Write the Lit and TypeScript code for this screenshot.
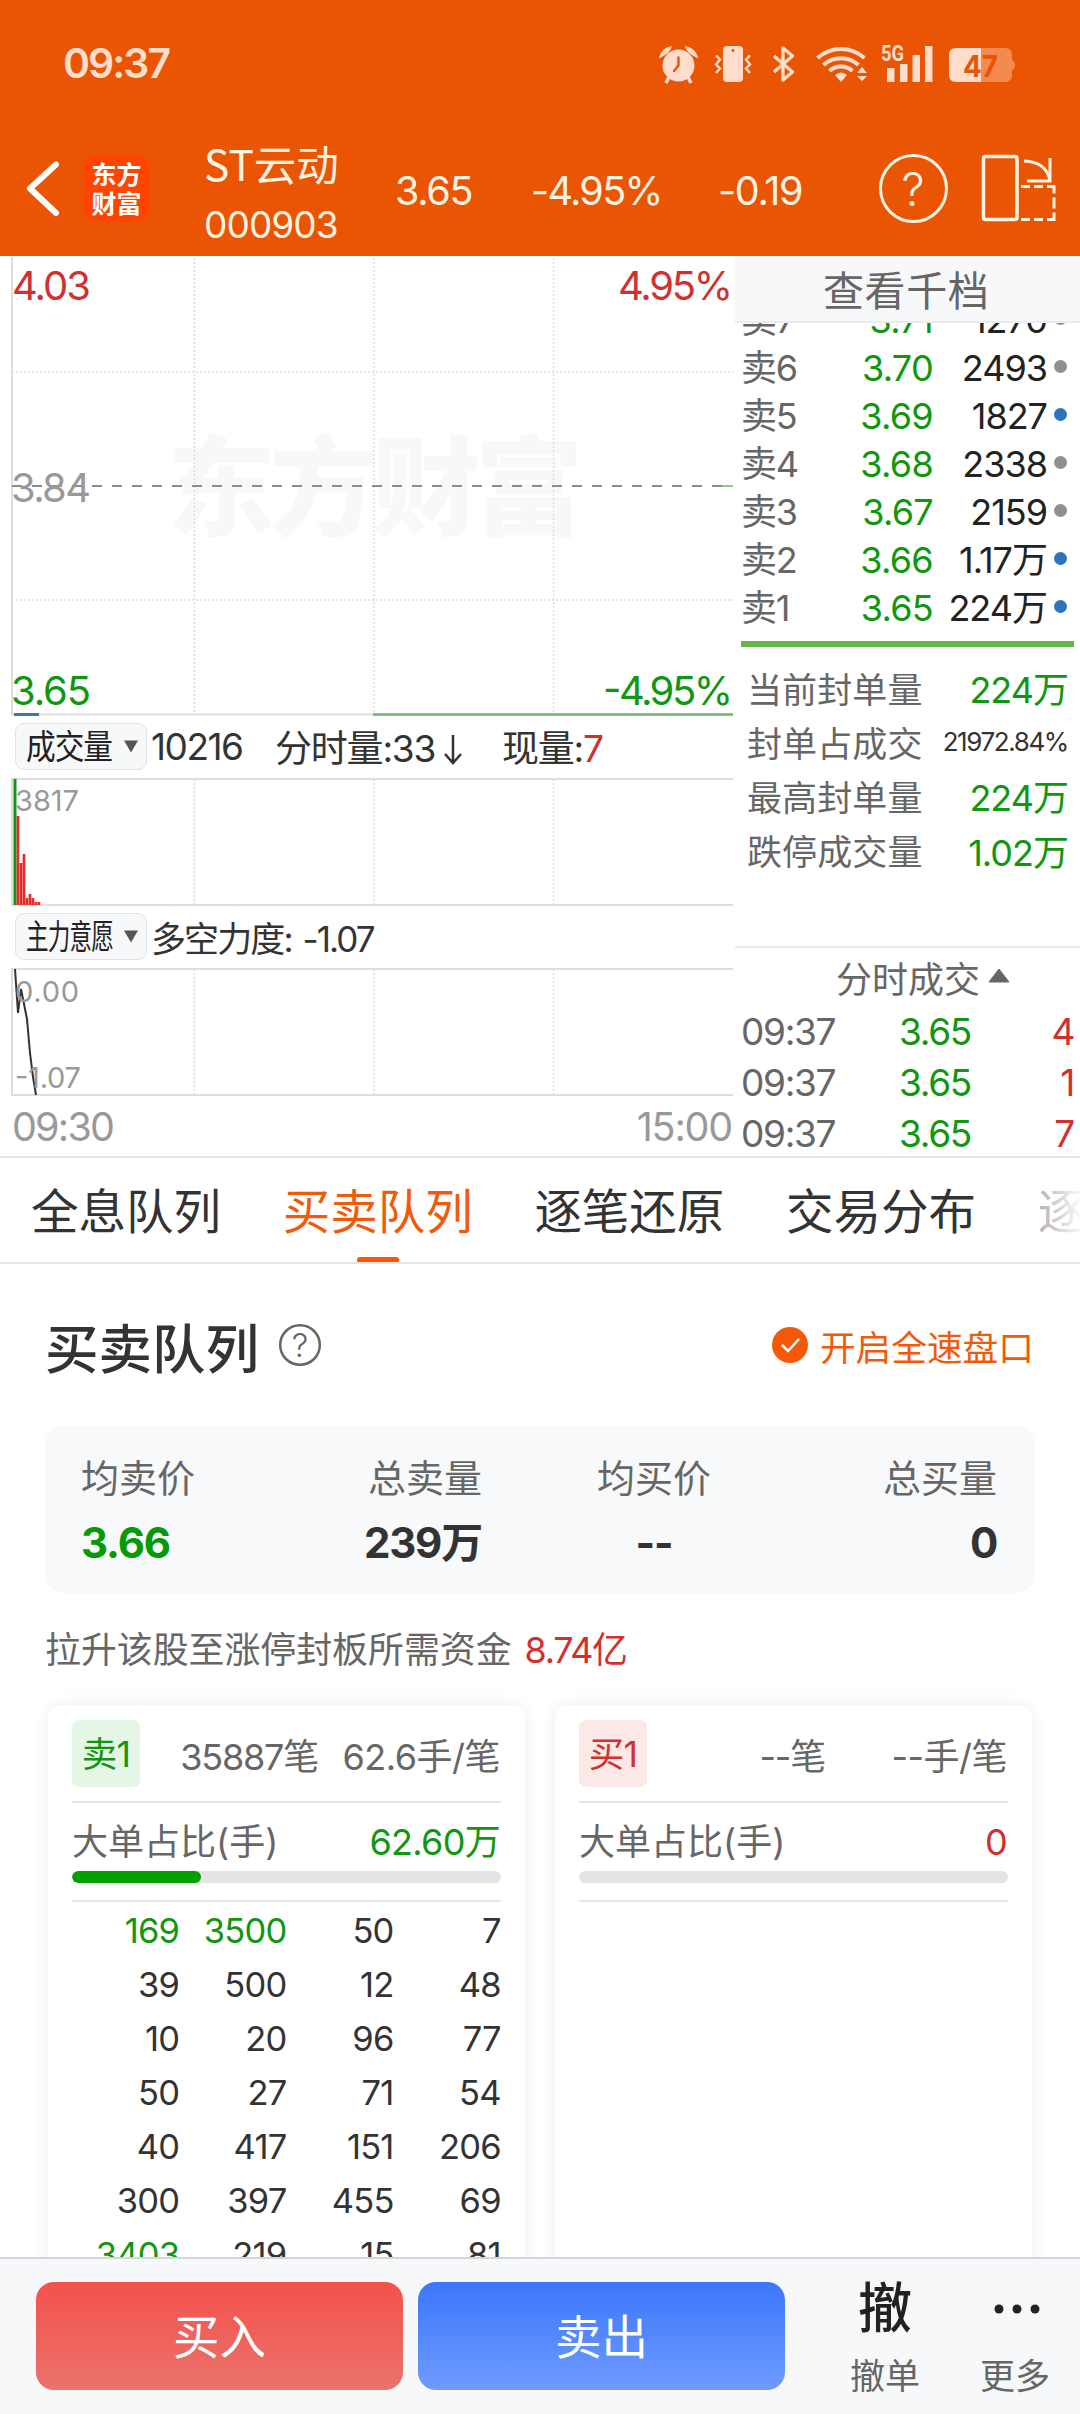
import { LitElement, html, svg, css } from "lit";
import { customElement, property } from "lit/decorators.js";
import { classMap } from "lit/directives/class-map.js";

const shared = css`
  * { box-sizing: border-box; }
  :host { display: block; }
  svg { display: block; }
  .green { color: #119611; }
  .red { color: #d0312f; }
`;

@customElement("status-bar")
class StatusBar extends LitElement {
  static styles = [shared, css`
    .bar { height: 124px; display: flex; justify-content: space-between; padding: 42px 64px 0 63px; color: #ffdccb; }
    .time { font-size: 41px; line-height: 43px; font-weight: 600; letter-spacing: -2px; }
    .num { font: 700 30px Inter, sans-serif; fill: #ea5504; }
    .net { font: 700 22px Roboto, sans-serif; fill: #ffdccb; }
  `];
  render() {
    return html`<div class="bar">
      <div class="time">09:37</div>
      <svg width="360" height="44" viewBox="656 42 360 44" fill="#ffdccb">
        <g>
          <circle cx="678.5" cy="65.500" r="16" />
          <path d="M660 57a13 13 0 0 1 11-10q-2 6-11 10zM697 57a13 13 0 0 0-11-10q2 6 11 10z" stroke="#ffdccb" stroke-width="1.500" />
          <path d="M669 77l-3 6M688 77l3 6" stroke="#ffdccb" stroke-width="3.500" />
          <path d="M678.500 57.500v8l-4.500 5.500" fill="none" stroke="#ea5504" stroke-width="2.400" stroke-linecap="round" />
        </g>
        <rect x="723" y="46" width="20" height="36" rx="4" />
        <circle cx="733" cy="50.500" r="1.500" fill="#ea5504" />
        <path d="M716 55.500l4 4-4 5 4 4-4 4.500M750 55.500l-4 4 4 5-4 4 4 4.500" fill="none" stroke="#ffdccb" stroke-width="2.400" />
        <path d="M774 56l18.500 16-9.500 8V48l9.500 8L774 72" fill="none" stroke="#ffdccb" stroke-width="3.300" stroke-linejoin="round" />
        <g fill="none" stroke="#ffdccb" stroke-width="4">
          <path d="M817.500 58a35 35 0 0 1 47 0" />
          <path d="M823.500 65a26 26 0 0 1 35 0" />
          <path d="M829.500 71a17 17 0 0 1 23 0" />
        </g>
        <path d="M835 75q6-5 12 0l-6 7zM862 67l5 6h-10zM862 81l-5-5h10z" />
        <text class="net" x="881" y="61" textLength="23" lengthAdjust="spacingAndGlyphs">5G</text>
        <path d="M887 68h7.500v14H887zM900 64h7.500v18H900zM912.500 55h7.500v27h-7.500zM925 46h7.500v36H925z" />
        <path d="M981 48h24q7 0 7 7v5q3 1 3 5t-3 5v5q0 7-7 7h-24z" fill="#f58a51" />
        <path d="M956 48h25v34h-25q-7 0-7-7V55q0-7 7-7z" />
        <text class="num" x="963" y="77" textLength="35" lengthAdjust="spacingAndGlyphs">47</text>
      </svg>
    </div>`;
  }
}

@customElement("stock-header")
class StockHeader extends LitElement {
  static styles = [shared, css`
    .bar { height: 132px; display: flex; color: #fff3e2; padding: 20px 0 0 24px; }
    .back { margin-top: 14px; width: 36px; }
    .logo { margin: 11px 0 0 23px; width: 67px; height: 67px; border-radius: 13px; background: #ff4500; color: #fff;
      font-family: "Noto Sans CJK SC", sans-serif; font-weight: 700; font-size: 25px; line-height: 29px;
      text-align: center; padding-top: 4px; }
    .name { margin-left: 54px; width: 191px; font-size: 42.500px; line-height: 44px; font-family: "Noto Sans CJK SC", sans-serif; white-space: nowrap; margin-top: -3px; }
    .code { font-family: Inter, sans-serif; font-size: 37px; letter-spacing: -0.900px; line-height: 38px; margin-top: 21px; }
    .n { font-size: 39.500px; letter-spacing: -1.300px; line-height: 44px; margin-top: 25px; white-space: nowrap; }
    .price { width: 136px; }
    .pct { width: 187px; letter-spacing: -1.700px; }
    .chg { width: 157px; }
    .q { font: 300 46px Inter, sans-serif; fill: #fff3e2; text-anchor: middle; }
  `];
  render() {
    return html`<div class="bar">
      <svg class="back" width="36" height="62" viewBox="24 158 36 62" fill="none" stroke="#fff" stroke-width="6" stroke-linecap="round" stroke-linejoin="round"><path d="M56 164.500L30 188.500L56 213" /></svg>
      <div class="logo">东方<br />财富</div>
      <div class="name">ST云动<div class="code">000903</div></div>
      <div class="n price">3.65</div>
      <div class="n pct">-4.95%</div>
      <div class="n chg">-0.19</div>
      <svg width="190" height="80" viewBox="875 144 190 80" fill="none" stroke="#fff3e2" stroke-width="3">
        <circle cx="913.500" cy="188.500" r="33" />
        <text class="q" x="913" y="205.500" stroke="none">?</text>
        <rect x="983.500" y="156.500" width="33.500" height="63" rx="2" stroke-width="3.500" />
        <path d="M1024 161q23 1 26 20M1050 158v23h-23" />
        <path d="M1021 186.500h9m4 0h9m4 0h7v7m0 4v11m0 4v7h-7m-4 0h-9m-4 0h-9" />
      </svg>
    </div>`;
  }
}

const VERTICALS = [194.5, 374, 553.5];
const BARS = [816, 863, 854, 898, 894, 898, 902, 902];

@customElement("minute-chart")
class MinuteChart extends LitElement {
  static styles = [shared, css`
    :host { width: 735px; }
    .big { font: 40px Inter, sans-serif; }
    .small { font: 29px Inter, sans-serif; fill: #999; }
    .r { fill: #d0312f; } .g { fill: #119611; } .grey { fill: #999; }
    .mark { font: 900 108px "Noto Sans CJK SC", sans-serif; fill: #f8f8f8; }
    .grid { stroke: #ddd; stroke-width: 1.500; stroke-dasharray: 2 2; fill: none; }
    .axis { stroke: #dedede; stroke-width: 2; fill: none; }
    .info { display: flex; align-items: center; height: 62px; padding: 0 0 2px 15px; font-size: 37px; letter-spacing: -1.200px; color: #333; white-space: nowrap; }
    .select { width: 132px; height: 47px; border: 1px solid #e0e3e8; border-radius: 9px; background: #f6f8fa; }
    .opt { font: 34px "Noto Sans CJK SC", sans-serif; fill: #222; }
    .total { width: 128px; padding-left: 4px; letter-spacing: -1.500px; }
    .per { width: 227px; }
    .force { padding-left: 4px; letter-spacing: -1.900px; word-spacing: 3px; font-size: 35px; }
    .arrow { display: inline-block; vertical-align: -3px; margin-left: 8px; }
    .times { display: flex; justify-content: space-between; height: 61px; padding: 7px 3px 0 12px; font-size: 39.500px; letter-spacing: -1.200px; line-height: 48px; color: #999; }
    .start { letter-spacing: -1.800px; }
  `];
  private select(label: string, width: number) {
    return html`<div class="select"><svg width="130" height="45"><text class="opt" x="10" y="35" textLength=${width} lengthAdjust="spacingAndGlyphs">${label}</text><path d="M108 16.500h14l-7 12z" fill="#555" /></svg></div>`;
  }
  private verticals(y1: number, y2: number) {
    return VERTICALS.map((x) => svg`<path class="grid" d="M${x} ${y1}V${y2}" />`);
  }
  render() {
    return html`
      <svg width="735" height="460" viewBox="0 256 735 460">
        <text class="mark" x="167" y="527" textLength="416">东方财富</text>
        ${this.verticals(258, 714)}
        <path class="grid" d="M12 372H733M12 600H733" />
        <path class="axis" d="M12 257V714.500H733" />
        <path d="M12 486H733" stroke="#8c8c8c" stroke-width="2" stroke-dasharray="10 10" />
        <path d="M722 486h11" stroke="#8cc98f" stroke-width="2" />
        <path d="M373 714.500H733" stroke="#75b27a" stroke-width="2.500" />
        <path d="M14 714.500h25" stroke="#4573ab" stroke-width="3" />
        <text class="big r" x="12" y="300" textLength="79">4.03</text>
        <text class="big r" x="618" y="300" textLength="115">4.95%</text>
        <text class="big grey" x="11" y="502" textLength="80">3.84</text>
        <text class="big g" x="11" y="705" textLength="80">3.65</text>
        <text class="big g" x="603" y="705" textLength="130">-4.95%</text>
      </svg>
      <div class="info">
        ${this.select("成交量", 86)}
        <div class="total">10216</div>
        <div class="per">分时量:33<svg class="arrow" width="20" height="31" fill="none" stroke="#333" stroke-width="2.500"><path d="M10 1v27M2 20l8 9l8-9" /></svg></div>
        <div>现量:<span class="red">7</span></div>
      </div>
      <svg width="735" height="128" viewBox="0 778 735 128">
        ${this.verticals(779, 904)}
        <path class="axis" d="M733 779H12V905H733" />
        <text class="small" x="15" y="811" textLength="64">3817</text>
        <path d="M15 779V905" stroke="#119611" stroke-width="3" />
        ${BARS.map((y, i) => svg`<rect x=${16.6 + i * 3} y=${y} width="2.700" height=${905 - y} fill="#e62a2a" />`)}
      </svg>
      <div class="info">
        ${this.select("主力意愿", 87)}
        <div class="force">多空力度: -1.07</div>
      </div>
      <svg width="735" height="128" viewBox="0 968 735 128">
        ${this.verticals(969, 1095)}
        <path class="axis" d="M733 969H12V1095H733" />
        <path d="M15 969L18 1013L21 989L27 1019L30 1053L33 1077L36 1095" fill="none" stroke="#333" stroke-width="2" />
        <text class="small" x="15" y="1002" textLength="64">0.00</text>
        <text class="small" x="15" y="1088" textLength="66">-1.07</text>
      </svg>
      <div class="times"><span class="start">09:30</span><span>15:00</span></div>`;
  }
}

const ASKS: [string, string, string, boolean][] = [
  ["卖7", "3.71", "1270", false],
  ["卖6", "3.70", "2493", false],
  ["卖5", "3.69", "1827", true],
  ["卖4", "3.68", "2338", false],
  ["卖3", "3.67", "2159", false],
  ["卖2", "3.66", "1.17万", true],
  ["卖1", "3.65", "224万", true],
];
const STATS: [string, string, string][] = [
  ["当前封单量", "224万", "green"],
  ["封单占成交", "21972.84%", "tiny"],
  ["最高封单量", "224万", "green"],
  ["跌停成交量", "1.02万", "green"],
];
const TICKS = ["4", "1", "7"];

@customElement("order-book")
class OrderBook extends LitElement {
  static styles = [shared, css`
    :host { width: 345px; color: #666; }
    .head { height: 67px; background: #f7f8fa; border-bottom: 2px solid #eaecef; font-size: 41px; line-height: 70px; letter-spacing: 0.600px; padding-left: 88px; }
    .asks { height: 318px; overflow: hidden; display: flex; flex-direction: column; justify-content: flex-end; padding-bottom: 9px; }
    .ask { flex: none; height: 48px; line-height: 48px; display: flex; align-items: center; padding-left: 6px; font-size: 36px; letter-spacing: -1px; white-space: nowrap; }
    .side { width: 100px; letter-spacing: -1.200px; }
    .price { width: 92px; text-align: right; letter-spacing: -0.700px; }
    .vol { width: 114px; text-align: right; color: #222; letter-spacing: -1px; }
    .dot { width: 13px; height: 13px; border-radius: 50%; margin: -3px 0 0 7px; background: #8e8e93; }
    .blue { background: #2f72c0; }
    .line { height: 6px; margin: 0 6px; background: #62b44b; }
    .stats { height: 301px; padding-top: 13px; border-bottom: 2px solid #e8e8e8; }
    .stat { height: 54.200px; display: flex; align-items: center; justify-content: space-between; padding: 0 12px 0 12px; font-size: 35px; letter-spacing: 0.100px; }
    .stat .green { font-size: 36px; letter-spacing: -1px; }
    .stat .tiny { font-size: 26px; color: #333; letter-spacing: -1.400px; }
    .title { height: 58px; display: flex; align-items: center; padding-left: 101px; font-size: 36px; }
    .tri { margin: -4px 0 0 8px; }
    .tick { height: 51px; display: flex; align-items: center; padding: 0 6px 0 6px; font-size: 37px; letter-spacing: -1.300px; }
    .tick .t { width: 158px; }
    .tick .q { margin-left: auto; }
  `];
  render() {
    return html`
      <div class="head">查看千档</div>
      <div class="asks">${ASKS.map(([s, p, v, b]) => html`<div class="ask">
        <span class="side">${s}</span><span class="price green">${p}</span><span class="vol">${v}</span>
        <span class=${classMap({ dot: true, blue: b })}></span></div>`)}</div>
      <div class="line"></div>
      <div class="stats">${STATS.map(([l, v, c]) => html`<div class="stat"><span>${l}</span><span class=${c}>${v}</span></div>`)}</div>
      <div class="title">分时成交<svg class="tri" width="22" height="15"><path d="M11 1L21 14H1z" fill="#666" stroke="#666" stroke-linejoin="round" /></svg></div>
      ${TICKS.map((q) => html`<div class="tick"><span class="t">09:37</span><span class="green">3.65</span><span class="q red">${q}</span></div>`)}`;
  }
}

@customElement("queue-card")
class QueueCard extends LitElement {
  @property() kind = "sell";
  @property() tag = "";
  @property() count = "";
  @property() avg = "";
  @property() big = "";
  @property({ type: Number }) ratio = 0;
  @property({ attribute: false }) rows: string[][] = [];
  static styles = [shared, css`
    .card { width: 477px; height: 700px; border-radius: 13px; background: #fff; box-shadow: 0 0 16px rgba(0, 0, 0, 0.08); padding: 15px 24px 0; font-size: 36px; color: #666; white-space: nowrap; }
    .top { display: flex; align-items: center; height: 81px; padding-bottom: 14px; letter-spacing: -1.200px; }
    .tag { width: 68px; height: 67px; border-radius: 7px; text-align: center; line-height: 69px; font-size: 35.500px; letter-spacing: -0.600px; background: #e5f5e6; color: #119611; }
    .buy .tag { background: #fde8e8; color: #d0312f; }
    .count { width: 178px; text-align: right; }
    .avg { width: 182px; text-align: right; letter-spacing: -0.500px; }
    .ratio { border-top: 2px solid #e6e6e6; border-bottom: 2px solid #e6e6e6; height: 101px; padding-top: 16px; }
    .legend { display: flex; justify-content: space-between; height: 46px; line-height: 46px; }
    .val { color: #119611; letter-spacing: -0.700px; padding-right: 1px; }
    .buy .val { color: #d0312f; }
    .track { margin-top: 6px; height: 12px; border-radius: 6px; background: #e3e3e3; overflow: hidden; }
    .fill { height: 12px; border-radius: 6px; background: #00a000; }
    .grid { display: grid; grid-template-columns: repeat(4, 107.200px); grid-auto-rows: 54px; line-height: 54px; padding-top: 2px; text-align: right; font-size: 34.500px; letter-spacing: -0.800px; color: #333; }
    .hot { color: #119611; }
  `];
  render() {
    return html`<div class=${classMap({ card: true, buy: this.kind === "buy" })}>
      <div class="top"><span class="tag">${this.tag}</span><span class="count">${this.count}</span><span class="avg">${this.avg}</span></div>
      <div class="ratio">
        <div class="legend"><span>大单占比(手)</span><span class="val">${this.big}</span></div>
        <div class="track"><div class="fill" style="width:${this.ratio}%"></div></div>
      </div>
      <div class="grid">${this.rows.flat().map((v) => html`<span class=${classMap({ hot: Number(v) > 3000 || v === "169" })}>${v}</span>`)}</div>
    </div>`;
  }
}

const TABS = ["全息队列", "买卖队列", "逐笔还原", "交易分布", "逐笔"];
const QUEUE = [
  ["169", "3500", "50", "7"],
  ["39", "500", "12", "48"],
  ["10", "20", "96", "77"],
  ["50", "27", "71", "54"],
  ["40", "417", "151", "206"],
  ["300", "397", "455", "69"],
  ["3403", "219", "15", "81"],
];

@customElement("app-root")
class AppRoot extends LitElement {
  static styles = [shared, css`
    :host { width: 1080px; height: 2414px; background: #fff; overflow: hidden; font-family: Inter, "Noto Sans CJK SC", sans-serif; }
    .top { background: #ea5504; }
    .market { display: flex; height: 902px; border-bottom: 2px solid #e4e4e4; }
    .tabs { display: flex; height: 106px; border-bottom: 2px solid #e4e4e4; padding-left: 31px; overflow: hidden; position: relative; color: #333; }
    .tab { flex: none; width: 251.700px; height: 105px; font-size: 47.500px; line-height: 107px; white-space: nowrap; }
    .tab.on { color: #f25a0a; }
    .mark { display: block; width: 42px; height: 6px; border-radius: 3px; background: #f25a0a; margin: -8px 0 0 74px; }
    .fade { position: absolute; right: 0; top: 0; width: 44px; height: 104px; background: linear-gradient(90deg, rgba(255,255,255,0.6), rgba(255,255,255,0.97)); }
    .body { height: 993px; overflow: hidden; padding: 48px 45px 0; }
    .title { display: flex; align-items: center; height: 66px; font-size: 53.500px; font-weight: 500; color: #333; white-space: nowrap; }
    .help { margin: 0 0 0 19px; }
    .hq { font: 300 33px Inter, sans-serif; fill: #666; text-anchor: middle; }
    .fast { margin-left: auto; display: flex; align-items: center; font-size: 35.700px; font-weight: 400; color: #f25a0a; letter-spacing: 0; padding-right: 1px; }
    .fast svg { margin: -1px 12px 0 0; }
    .sum { margin-top: 48px; height: 167px; border-radius: 19px; background: #f8f9fb; display: flex; padding: 28px 38px 0 36px; }
    .cell { font-size: 38px; line-height: 48px; color: #666; white-space: nowrap; }
    .cell b { display: block; font-size: 42px; line-height: 48px; margin-top: 17px; color: #333; letter-spacing: -1.200px; }
    .cell b.green { color: #079a07; }
    .c1 { width: 271px; }
    .c2 { width: 130px; text-align: right; }
    .c3 { width: 114px; margin-left: 115px; text-align: center; }
    .c4 { margin-left: auto; text-align: right; }
    .need { margin-top: 33px; height: 48px; line-height: 48px; font-size: 35.900px; color: #666; white-space: nowrap; }
    .need span { margin-left: 13px; letter-spacing: -1.300px; }
    .cards { display: flex; gap: 30px; margin: 31px 0 0 3px; }
    .bottom { height: 157px; background: #f7f8fa; border-top: 2px solid #d2d5d9; padding: 23px 0 0 36px; display: flex; }
    .btn { width: 367px; height: 108px; border-radius: 18px; margin-right: 15px; color: #fff; font-size: 46.500px; line-height: 110px; text-align: center; }
    .buy { background: linear-gradient(#f3524b, #eb726c); }
    .sell { background: linear-gradient(#3b76fa, #6e9bff); }
    .act { width: 130px; text-align: center; font-size: 35px; color: #666; line-height: 42px; white-space: nowrap; }
    .icon { height: 73px; font-size: 54px; line-height: 54px; font-weight: 500; color: #222; display: flex; justify-content: center; }
    .more { padding: 20px 0 0 3px; }
    .spacer { margin-left: 20px; }
  `];
  render() {
    return html`
      <div class="top"><status-bar></status-bar><stock-header></stock-header></div>
      <div class="market"><minute-chart></minute-chart><order-book></order-book></div>
      <div class="tabs">
        ${TABS.map((t, i) => html`<div class=${classMap({ tab: true, on: i === 1 })}>${t}${i === 1 ? html`<i class="mark"></i>` : ""}</div>`)}
        <div class="fade"></div>
      </div>
      <div class="body">
        <div class="title">买卖队列
          <svg class="help" width="44" height="44"><circle cx="22" cy="22" r="19.800" fill="none" stroke="#666" stroke-width="2.500" /><text class="hq" x="22" y="34">?</text></svg>
          <div class="fast"><svg width="36" height="36"><circle cx="18" cy="18" r="18" fill="#f4590b" /><path d="M10 18l6 6l11-12" fill="none" stroke="#fff" stroke-width="2.500" /></svg>开启全速盘口</div>
        </div>
        <div class="sum">
          <div class="cell c1">均卖价<b class="green">3.66</b></div>
          <div class="cell c2">总卖量<b>239万</b></div>
          <div class="cell c3">均买价<b>--</b></div>
          <div class="cell c4">总买量<b>0</b></div>
        </div>
        <div class="need">拉升该股至涨停封板所需资金<span class="red">8.74亿</span></div>
        <div class="cards">
          <queue-card tag="卖1" count="35887笔" avg="62.6手/笔" big="62.60万" ratio="30" .rows=${QUEUE}></queue-card>
          <queue-card kind="buy" tag="买1" count="--笔" avg="--手/笔" big="0"></queue-card>
        </div>
      </div>
      <div class="bottom">
        <div class="btn buy">买入</div>
        <div class="btn sell">卖出</div>
        <div class="act spacer"><div class="icon">撤</div>撤单</div>
        <div class="act"><div class="icon more"><svg width="48" height="14" fill="#222"><circle cx="6" cy="7" r="4.500" /><circle cx="24" cy="7" r="4.500" /><circle cx="42" cy="7" r="4.500" /></svg></div>更多</div>
      </div>`;
  }
}
